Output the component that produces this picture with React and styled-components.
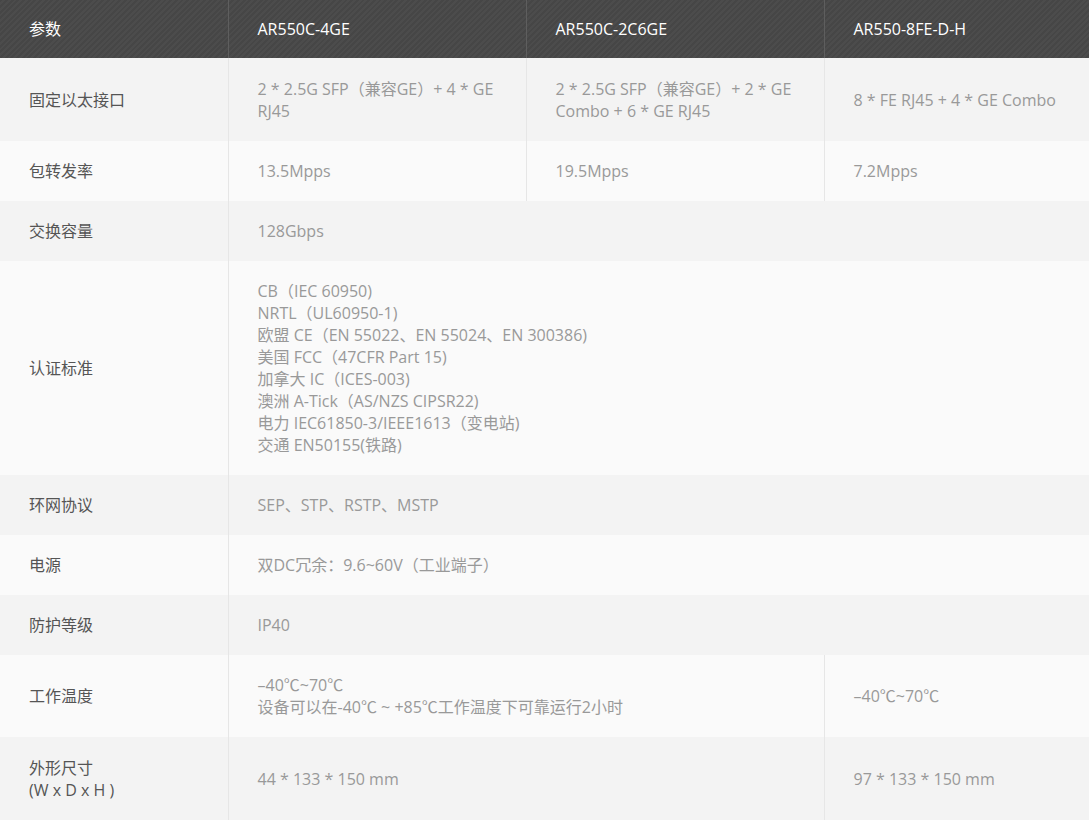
import React from "react";
import styled, { createGlobalStyle } from "styled-components";

const Global = createGlobalStyle`
  body { margin: 0; background: #fff; font-family: "Open Sans", "Noto Sans CJK SC", sans-serif; }
`;

const Table = styled.table`
  width: 1089px;
  border-collapse: collapse;
  table-layout: fixed;
  font-size: 16px;
  line-height: 22px;
`;

const HeadRow = styled.tr`
  height: 58px;
  background: repeating-linear-gradient(135deg, #464646 0 2px, #4c4c4c 2px 4px);
`;

const Th = styled.th`
  text-align: left;
  font-weight: 400;
  color: #fff;
  padding: 0 0 0 29px;
  border-left: 1px solid #5e5e5e;
  &:first-child { border-left: none; }
`;

const Row = styled.tr`
  height: ${p => p.$h}px;
  background: ${p => (p.$odd ? "#f3f3f3" : "#fafafa")};
`;

const Label = styled.td`
  color: #555;
  padding: 0 0 0 29px;
  vertical-align: middle;
`;

const Cell = styled.td`
  color: #999;
  padding: 0 10px 0 29px;
  border-left: 1px solid #e6e6e6;
  vertical-align: middle;
`;

const rows = [
  { l: "固定以太接口", h: 83, c: [["2 * 2.5G SFP（兼容GE）+ 4 * GE RJ45"], ["2 * 2.5G SFP（兼容GE）+ 2 * GE Combo + 6 * GE RJ45"], ["8 * FE RJ45 + 4 * GE Combo"]] },
  { l: "包转发率", h: 60, c: [["13.5Mpps"], ["19.5Mpps"], ["7.2Mpps"]] },
  { l: "交换容量", h: 60, c: [["128Gbps", 3]] },
  { l: "认证标准", h: 214, c: [[["CB（IEC 60950)", "NRTL（UL60950-1)", "欧盟 CE（EN 55022、EN 55024、EN 300386)", "美国 FCC（47CFR Part 15)", "加拿大 IC（ICES-003)", "澳洲 A-Tick（AS/NZS CIPSR22)", "电力 IEC61850-3/IEEE1613（变电站)", "交通 EN50155(铁路)"], 3]] },
  { l: "环网协议", h: 60, c: [["SEP、STP、RSTP、MSTP", 3]] },
  { l: "电源", h: 60, c: [["双DC冗余：9.6~60V（工业端子）", 3]] },
  { l: "防护等级", h: 60, c: [["IP40", 3]] },
  { l: "工作温度", h: 82, c: [[["–40℃~70℃", "设备可以在-40℃ ~ +85℃工作温度下可靠运行2小时"], 2], ["–40℃~70℃"]] },
  { l: ["外形尺寸", "(W x D x H )"], h: 83, c: [["44 * 133 * 150 mm", 2], ["97 * 133 * 150 mm"]] },
];

const lines = v => (Array.isArray(v) ? v.map((s, i) => <div key={i}>{s}</div>) : v);

export default function App() {
  return (
    <>
      <Global />
      <Table>
        <colgroup>
          <col style={{ width: 228 }} />
          <col style={{ width: 298 }} />
          <col style={{ width: 298 }} />
          <col />
        </colgroup>
        <thead>
          <HeadRow>
            <Th>参数</Th>
            <Th>AR550C-4GE</Th>
            <Th>AR550C-2C6GE</Th>
            <Th>AR550-8FE-D-H</Th>
          </HeadRow>
        </thead>
        <tbody>
          {rows.map((r, i) => (
            <Row key={i} $h={r.h} $odd={i % 2 === 0}>
              <Label>{lines(r.l)}</Label>
              {r.c.map(([v, span], j) => (
                <Cell key={j} colSpan={span || 1}>{lines(v)}</Cell>
              ))}
            </Row>
          ))}
        </tbody>
      </Table>
    </>
  );
}
